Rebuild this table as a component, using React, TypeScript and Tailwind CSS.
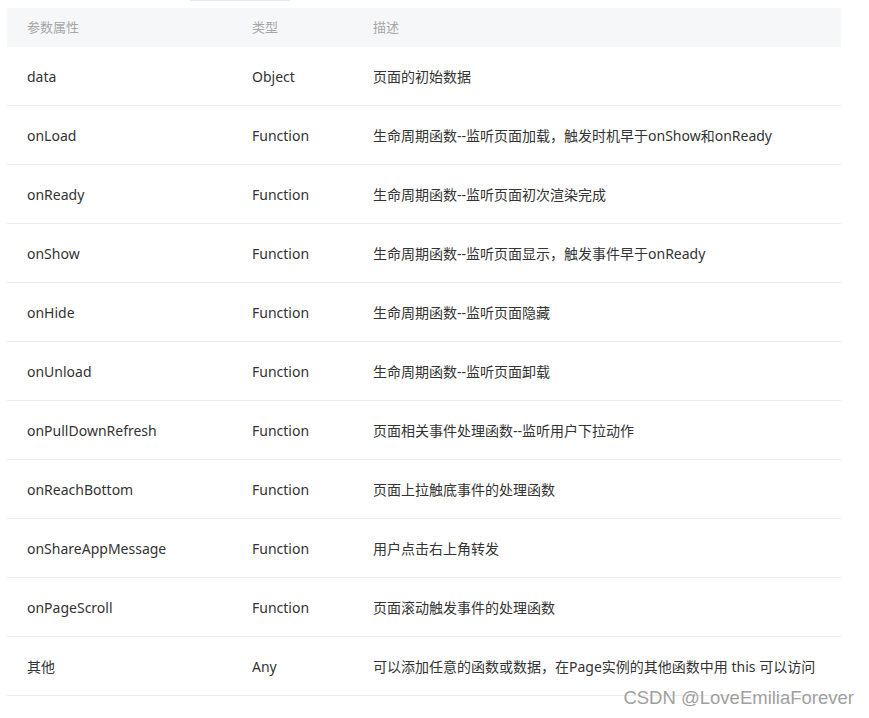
const rows: [string, string, string][] = [
  ["data", "Object", "页面的初始数据"],
  ["onLoad", "Function", "生命周期函数--监听页面加载，触发时机早于onShow和onReady"],
  ["onReady", "Function", "生命周期函数--监听页面初次渲染完成"],
  ["onShow", "Function", "生命周期函数--监听页面显示，触发事件早于onReady"],
  ["onHide", "Function", "生命周期函数--监听页面隐藏"],
  ["onUnload", "Function", "生命周期函数--监听页面卸载"],
  ["onPullDownRefresh", "Function", "页面相关事件处理函数--监听用户下拉动作"],
  ["onReachBottom", "Function", "页面上拉触底事件的处理函数"],
  ["onShareAppMessage", "Function", "用户点击右上角转发"],
  ["onPageScroll", "Function", "页面滚动触发事件的处理函数"],
  ["其他", "Any", "可以添加任意的函数或数据，在Page实例的其他函数中用 this 可以访问"],
];

export default function App() {
  return (
    <div
      className="relative h-[718px] w-[869px] overflow-hidden bg-white text-[#333]"
      style={{ fontFamily: '"Noto Sans", "Noto Sans CJK SC", sans-serif' }}
    >
      <div className="ml-[190px] h-px w-[100px] bg-[#e8e8e8]" />
      <div className="ml-[7px] mt-[7px] w-[834px]">
        <div className="flex h-[39px] items-center bg-[#f6f7f9] text-[13px] text-[#a6a6a6]">
          <div className="w-[245px] pl-5">参数属性</div>
          <div className="w-[121px]">类型</div>
          <div className="flex-1">描述</div>
        </div>
        {rows.map(([name, type, desc]) => (
          <div
            key={name}
            className="flex h-[59px] items-center border-b border-[#ebebeb] text-[14px]"
          >
            <div className="w-[245px] pl-5">{name}</div>
            <div className="w-[121px]">{type}</div>
            <div className="flex-1">{desc}</div>
          </div>
        ))}
      </div>
      <div
        className="absolute right-[15px] top-[689px] text-[18.5px] leading-none text-[#a0a0a0]"
        style={{ fontFamily: '"Liberation Sans", Arial, sans-serif' }}
      >
        CSDN @LoveEmiliaForever
      </div>
    </div>
  );
}
